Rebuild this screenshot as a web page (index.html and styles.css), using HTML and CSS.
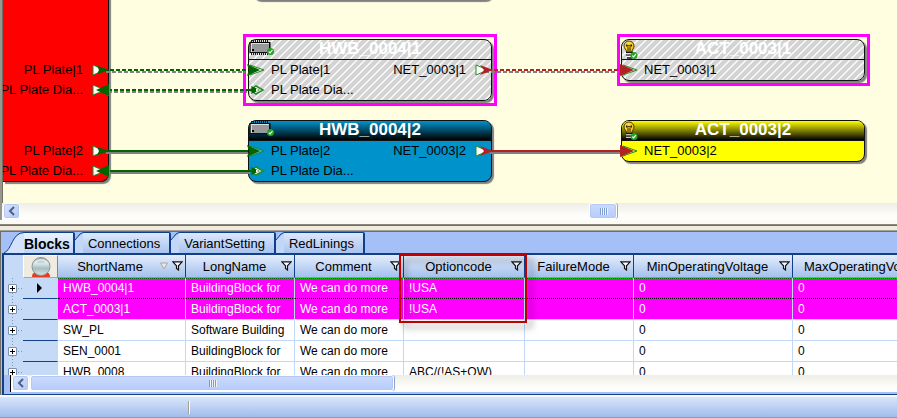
FILE: index.html
```html
<!DOCTYPE html>
<html lang="en">
<head>
<meta charset="utf-8">
<title>Block editor</title>
<link rel="stylesheet" href="styles.css">
</head>
<body>
<svg class="defs" aria-hidden="true">
  <defs>
    <linearGradient id="bulb-fill" x1="0" y1="0" x2="1" y2="1"><stop offset="0" stop-color="#ffe65c"/><stop offset="1" stop-color="#f5b800"/></linearGradient>
    <linearGradient id="ball-fill" x1="0" y1="0" x2="0" y2="1"><stop offset="0" stop-color="#8fa2a6"/><stop offset=".35" stop-color="#dbe7e8"/><stop offset=".6" stop-color="#a9bdc0"/><stop offset="1" stop-color="#d8e4e4"/></linearGradient>
    <symbol id="ok" viewBox="0 0 8 8"><circle cx="4" cy="4" r="4" fill="#22a322"/><path d="M2 4.2 3.5 5.6 6.2 2.4" fill="none" stroke="#fff" stroke-width="1.3"/></symbol>
    <symbol id="chip" viewBox="0 0 26 17">
      <path d="M2 1H20M2 14H20" stroke="#0000e0" stroke-width="2" stroke-dasharray="1 1"/>
      <rect x="1" y="2.500" width="20" height="10" fill="#999" stroke="#000"/>
      <path d="M2 3.500H20" stroke="#ddd"/><path d="M2.500 4V12" stroke="#ddd"/><path d="M20.500 3V13M1 12.500H21" stroke="#111"/>
      <rect x="3" y="9" width="2" height="2" fill="#000"/>
      <use href="#ok" x="18" y="8" width="7" height="7"/>
    </symbol>
    <symbol id="bulb" viewBox="0 0 17 21">
      <path d="M7 1a5 5 0 0 1 5 5c0 3-2 3-2 6H4.500C4.500 9 2 9 2 6a5 5 0 0 1 5-5Z" fill="url(#bulb-fill)" stroke="#4a3900"/>
      <path d="M4.500 4.500V6L6 7.500V11M9.500 4.500V6L8 7.500V11M5 5 7 6 9 5" fill="none" stroke="#2b2100"/>
      <path d="M4 12.500H11M4 15H11M5 18H10" stroke="#111" stroke-width="1.500"/><path d="M4 13.800H10M4 16.300H10" stroke="#fff"/>
      <use href="#ok" x="8" y="12" width="8" height="7"/>
    </symbol>
    <symbol id="funnel" viewBox="0 0 11 10"><path d="M.8.800H10.200L6.500 4.800V9L4.500 7.500V4.800Z" fill="#fff" stroke="#111" stroke-width="1.200"/></symbol>
    <symbol id="out-green" viewBox="0 0 18 14"><path d="M1 2V12L13 7Z" fill="#fff" stroke="#228b22"/><path d="M5 3 18 7 5 11 7 7Z" fill="#006400"/></symbol>
    <symbol id="back-green" viewBox="0 0 18 14"><path d="M1 2V12L13 7Z" fill="#fff" stroke="#228b22"/><path d="M18 2V14L12 10Z" fill="#808080"/><path d="M17 1V13L4 7Z" fill="#006400"/></symbol>
    <symbol id="in-green" viewBox="0 0 18 14"><path d="M3 2 17 7 3 12" fill="#fff" fill-opacity=".35" stroke="#228b22"/><path d="M0 1 13 7 0 13 2 7Z" fill="#006400"/></symbol>
    <symbol id="diamond" viewBox="0 0 18 14"><path d="M3 7 9 3 16 7 9 11Z" fill="#fff" stroke="#228b22" stroke-width="1.500"/><path d="M0 6H5L4 3 13 7 4 11 5 8H0Z" fill="#006400"/><path d="M9 5.500 12 7 9 8.500Z" fill="#fff"/></symbol>
    <symbol id="out-red" viewBox="0 0 18 14"><path d="M1 2V12L13 7Z" fill="#fff" stroke="#228b22"/><path d="M5 2 18 7 5 12 9 7Z" fill="#b22222"/></symbol>
    <symbol id="in-red" viewBox="0 0 18 14"><path d="M3 2 17 7 3 12" fill="#fff" fill-opacity=".35" stroke="#228b22"/><path d="M0 1 14 7 0 13Z" fill="#b22222"/></symbol>
  </defs>
</svg>

<div class="app">
  <main class="diagram">
    <section class="canvas">
      <div class="node cut"></div>
      <article class="node source">
        <div class="port p1">PL Plate|1</div>
        <div class="port p2">PL Plate Dia...</div>
        <div class="port p3">PL Plate|2</div>
        <div class="port p4">PL Plate Dia...</div>
      </article>
      <article class="node hwb one hatched">
        <h2><svg class="chip"><use href="#chip"/></svg>HWB_0004|1</h2>
        <div class="ports"><span>PL Plate|1</span><span>NET_0003|1</span></div>
        <div class="ports"><span>PL Plate Dia...</span></div>
      </article>
      <article class="node hwb two blue">
        <h2><svg class="chip"><use href="#chip"/></svg>HWB_0004|2</h2>
        <div class="ports"><span>PL Plate|2</span><span>NET_0003|2</span></div>
        <div class="ports"><span>PL Plate Dia...</span></div>
      </article>
      <article class="node act one hatched">
        <h2><svg class="bulb"><use href="#bulb"/></svg>ACT_0003|1</h2>
        <div class="ports"><span>NET_0003|1</span></div>
      </article>
      <article class="node act two yellow">
        <h2><svg class="bulb"><use href="#bulb"/></svg>ACT_0003|2</h2>
        <div class="ports"><span>NET_0003|2</span></div>
      </article>
      <div class="selection select-hwb"></div>
      <div class="selection select-act"></div>
      <svg class="wires" aria-hidden="true">
        <g fill="none" stroke-width="2">
          <g stroke="#808080">
            <path d="M106 72H245M108 92H247M485 72H618" stroke-dasharray="4 2"/>
            <path d="M106 153H248M108 173H250M490 153H621"/>
          </g>
          <g stroke="#006400">
            <path d="M104 70H247M108 90H249" stroke-dasharray="4 2"/>
            <path d="M104 151H248M108 171H250"/>
          </g>
          <g stroke="#b22222"><path d="M488 70H621" stroke-dasharray="4 2"/><path d="M488 151H621"/></g>
        </g>
        <use href="#out-green" x="92" y="63" width="18" height="14"/>
        <use href="#back-green" x="92" y="83" width="18" height="14"/>
        <use href="#out-green" x="92" y="144" width="18" height="14"/>
        <use href="#back-green" x="92" y="164" width="18" height="14"/>
        <use href="#in-green" x="247" y="63" width="18" height="14"/>
        <use href="#diamond" x="247" y="83" width="18" height="14"/>
        <use href="#in-green" x="247" y="144" width="18" height="14"/>
        <use href="#diamond" x="247" y="164" width="18" height="14"/>
        <use href="#out-red" x="475" y="63" width="18" height="14"/>
        <use href="#out-red" x="475" y="144" width="18" height="14"/>
        <use href="#in-red" x="620" y="63" width="18" height="14"/>
        <use href="#in-red" x="620" y="144" width="18" height="14"/>
      </svg>
    </section>
    <div class="scroll">
      <button class="arrow" aria-label="Scroll left"><svg viewBox="0 0 8 8"><path d="M6 0 2 4 6 8"/></svg></button>
      <div class="track"><div class="thumb small"><i></i><i></i><i></i><i></i></div></div>
    </div>
  </main>
  <div class="splitter"></div>
  <section class="panel">
    <nav class="tabs">
      <button class="tab active"><svg viewBox="0 0 20 21"><path class="fill" d="M0 21C8 18 8 1 20 1V21Z"/><path d="M0 21C8 18 8 .5 20 .5"/></svg><span>Blocks</span></button>
      <button class="tab"><svg viewBox="0 0 8 21"><path class="fill" d="M0 21V8L8 1V21Z"/><path d="M0 8 5 2 8 .5"/></svg><span>Connections</span></button>
      <button class="tab"><svg viewBox="0 0 8 21"><path class="fill" d="M0 21V8L8 1V21Z"/><path d="M0 8 5 2 8 .5"/></svg><span>VariantSetting</span></button>
      <button class="tab"><svg viewBox="0 0 8 21"><path class="fill" d="M0 21V8L8 1V21Z"/><path d="M0 8 5 2 8 .5"/></svg><span>RedLinings</span></button>
    </nav>
    <div class="grid">
      <div class="rows">
        <table>
          <colgroup><col class="c-exp"><col class="c-sel"><col class="c-short"><col class="c-text"><col class="c-text"><col class="c-opt"><col class="c-text"><col class="c-num"><col class="c-num"></colgroup>
          <thead>
            <tr>
              <th class="blank"></th>
              <th class="ball"><svg viewBox="0 0 22 20"><path d="M2 20C2 15 6 14 11 14S20 15 20 20Z" fill="#e63c1c"/><circle cx="11" cy="9.500" r="9" fill="url(#ball-fill)" stroke="#82979b"/><path d="M5 6C7 2 15 2 17 6" fill="none" stroke="#eef5f5" stroke-width="2" opacity=".7"/></svg></th>
              <th><div class="head"><span>ShortName</span><svg class="sort" viewBox="0 0 8 8"><path d="M.5 1H7.500L4 7Z"/></svg><button aria-label="Filter ShortName"><svg><use href="#funnel"/></svg></button></div></th>
              <th><div class="head"><span>LongName</span><button aria-label="Filter LongName"><svg><use href="#funnel"/></svg></button></div></th>
              <th><div class="head"><span>Comment</span><button aria-label="Filter Comment"><svg><use href="#funnel"/></svg></button></div></th>
              <th><div class="head"><span>Optioncode</span><button aria-label="Filter Optioncode"><svg><use href="#funnel"/></svg></button></div></th>
              <th><div class="head"><span>FailureMode</span><button aria-label="Filter FailureMode"><svg><use href="#funnel"/></svg></button></div></th>
              <th><div class="head"><span>MinOperatingVoltage</span><button aria-label="Filter MinOperatingVoltage"><svg><use href="#funnel"/></svg></button></div></th>
              <th><div class="head"><span>MaxOperatingVoltage</span><button aria-label="Filter MaxOperatingVoltage"><svg><use href="#funnel"/></svg></button></div></th>
            </tr>
          </thead>
          <tbody>
            <tr class="marked current"><td class="exp"><button aria-label="Expand"></button></td><td class="sel"><svg viewBox="0 0 6 10"><path d="M0 0 5 5 0 10Z"/></svg></td><td>HWB_0004|1</td><td>BuildingBlock for</td><td>We can do more</td><td>!USA</td><td></td><td>0</td><td>0</td></tr>
            <tr class="marked"><td class="exp"><button aria-label="Expand"></button></td><td class="sel"></td><td>ACT_0003|1</td><td>BuildingBlock for</td><td>We can do more</td><td>!USA</td><td></td><td>0</td><td>0</td></tr>
            <tr><td class="exp"><button aria-label="Expand"></button></td><td class="sel"></td><td>SW_PL</td><td>Software Building</td><td>We can do more</td><td></td><td></td><td>0</td><td>0</td></tr>
            <tr><td class="exp"><button aria-label="Expand"></button></td><td class="sel"></td><td>SEN_0001</td><td>BuildingBlock for</td><td>We can do more</td><td></td><td></td><td>0</td><td>0</td></tr>
            <tr><td class="exp"><button aria-label="Expand"></button></td><td class="sel"></td><td>HWB_0008</td><td>BuildingBlock for</td><td>We can do more</td><td>ABC/(!AS+QW)</td><td></td><td>0</td><td>0</td></tr>
          </tbody>
        </table>
      </div>
      <div class="scroll lower">
        <button class="arrow" aria-label="Scroll left"><svg viewBox="0 0 8 8"><path d="M6 0 2 4 6 8"/></svg></button>
        <div class="track"><div class="thumb wide"><i></i><i></i><i></i><i></i></div></div>
      </div>
      <div class="callout"></div>
    </div>
  </section>
  <footer class="status"><span></span></footer>
</div>
</body>
</html>
```
FILE: styles.css
```css
* { box-sizing: border-box; }
body { margin: 0; font: 13px "Liberation Sans", Arial, sans-serif; color: #000; }
button { font: inherit; color: inherit; padding: 0; border: 0; background: none; }
svg { display: block; }
.defs { position: absolute; width: 0; height: 0; }

.app { display: flex; flex-direction: column; height: 100vh; overflow: hidden; background: #f0ece0; }

/* Diagram */
.diagram { flex: 1; min-height: 0; display: flex; flex-direction: column; border-left: 2px solid #9a978e; box-shadow: inset 1px 0 #716f64; }
.canvas { flex: 1; position: relative; overflow: hidden; margin-left: 1px; background: #fffee1; }
.wires { position: absolute; top: 0; left: -3px; width: calc(100% + 3px); height: 100%; }
.node { position: absolute; border: 1px solid #111; border-radius: 8px; box-shadow: 2px 2px 1px #808080; }
.node h2 { position: relative; margin: 0; height: 20px; line-height: 17px; font-size: 17px; text-align: center; color: #fff; border-bottom: 1px solid #111; border-radius: 7px 7px 0 0; }
.ports { display: flex; justify-content: space-between; line-height: 20px; padding: 0 25px 0 22px; }
.hwb { left: 245px; width: 244px; }
.act { left: 618px; width: 244px; }
.one { top: 39px; }
.two { top: 120px; }
.hatched { background: linear-gradient(135deg, #fff 4%, #d3d3d3 8% 42%, #fff 46% 54%, #d3d3d3 58% 92%, #fff 96%) 0 0 / 8px 8px; }
.blue { background: #0092cb; }
.blue h2 { background: linear-gradient(#0092cb, #000); }
.yellow { background: #ff0; }
.yellow h2 { background: linear-gradient(#ff0, #000); }
.chip { position: absolute; left: 0; top: 0; width: 26px; height: 17px; }
.bulb { position: absolute; left: 0; top: 0; width: 17px; height: 21px; }
.cut { left: 249px; top: -20px; width: 240px; height: 20px; }
.source { left: 0; top: -20px; width: 106px; height: 202px; border-left: 0; border-radius: 0 0 8px 0; background: #f00; overflow: hidden; }
.port { position: absolute; right: 25px; line-height: 20px; white-space: nowrap; }
.p1 { top: 79px; }
.p2 { top: 99px; }
.p3 { top: 160px; }
.p4 { top: 180px; }
.selection { position: absolute; top: 34px; width: 254px; border: 3px solid #f0f; }
.select-hwb { left: 240px; height: 72px; }
.select-act { left: 614px; width: 253px; height: 52px; }

/* Scroll bars */
.scroll { display: flex; height: 17px; background: linear-gradient(#efede6, #fdfdfa 70%); }
.arrow { width: 17px; height: 16px; margin-left: 1px; border: 1px solid #fff; border-radius: 3px; background: linear-gradient(135deg, #dbe6ff, #b2c8f6); box-shadow: inset 0 0 0 1px #b4c7ef; }
.arrow svg { width: 8px; height: 8px; margin: auto; overflow: visible; }
.arrow path { fill: none; stroke: #4d6185; stroke-width: 2; }
.track { flex: 1; }
.thumb { display: flex; justify-content: center; align-items: center; gap: 1px; height: 16px; border: 1px solid #fff; border-radius: 3px; background: linear-gradient(#cbdafd, #b7ccfa); box-shadow: inset 0 0 0 1px #b4c8f3, 1px 0 #8ba6d6; }
.thumb i { width: 1px; height: 7px; background: #7e9bd2; box-shadow: 1px 0 #eef4fe; }
.small { width: 28px; margin-left: 569px; }
.wide { width: 364px; margin-left: 1px; }
.splitter { height: 12px; background: linear-gradient(#fbfaf5 0 4px, #8a867a 4px 5px, #716f64 5px 6px, #efebde 6px 10px, #a5a195 10px 11px, #716f64 11px); }

/* Tabs */
.panel { height: 163px; display: flex; flex-direction: column; border-left: 1px solid #716f64; background: #a4c0f6; }
.tabs { display: flex; height: 21px; padding-left: 3px; }
.tab { display: flex; height: 21px; line-height: 22px; }
.tab svg { height: 21px; width: 8px; }
.tab path { fill: none; stroke: #0f3f8c; }
.tab .fill { fill: #c2d7f8; stroke: none; }
.tab span { padding: 0 9px 0 5px; height: 21px; border-top: 1px solid #0f3f8c; border-right: 2px solid #0f3f8c; border-radius: 0 2px 0 0; background: linear-gradient(#dce8fc, #a8c3f0); }
.tab.active { font-weight: bold; font-size: 14px; }
.tab.active svg { width: 20px; }
.tab.active span { padding: 0 3px 0 0; background: linear-gradient(#eaf2fe, #bed5f8); }
.tab.active .fill { fill: #d4e3fb; }

/* Grid */
.grid { flex: 1; min-height: 0; position: relative; display: flex; flex-direction: column; margin-left: 1px; border: solid #123f85; border-width: 2px 0 1px 2px; }
.rows { height: 120px; overflow: hidden; background: #fff; }
table { width: 947px; table-layout: fixed; border-collapse: separate; border-spacing: 0; font-size: 12px; }
.c-exp { width: 19px; }
.c-sel { width: 35px; }
.c-short { width: 128px; }
.c-text { width: 109px; }
.c-opt { width: 121px; }
.c-num { width: 159px; }
th { height: 23px; padding: 0; font-size: 13px; font-weight: normal; background: linear-gradient(#e3edfc, #a5c1ee); border-right: 1px solid #123f85; border-bottom: 1px solid #7b98c9; }
th.blank { background: #c5daf6; border: 0; }
th.ball { background: #f0ebe0; border: 1px solid #fff; border-bottom-color: #aaa89c; border-right-color: #8a8776; }
.ball svg { width: 22px; height: 20px; margin: 0 auto; }
.head { display: flex; align-items: center; padding-right: 2px; }
.head span { flex: 1; padding-left: 2px; white-space: nowrap; }
.head button, .head button svg { width: 11px; height: 10px; }
.sort { width: 8px; height: 8px; margin-right: 4px; fill: #ece9e0; stroke: #aaa79d; }
td { height: 21px; padding: 0 0 0 5px; line-height: 20px; white-space: nowrap; border-right: 1px solid #c1d8f9; border-bottom: 1px solid #c1d8f9; }
.marked td { background: #f0f; color: #fff; }
.current td:nth-child(n+3) { border-bottom: 1px dotted #000; background-image: repeating-linear-gradient(90deg, #006400 0 1px, #0c0 1px 2px); background-size: 100% 1px; background-repeat: no-repeat; }
.marked .exp, .exp { padding: 0; background: linear-gradient(90deg, transparent 14px, #8b96a5 14px 15px, transparent 15px 17px, #8b96a5 17px 18px, transparent 18px) 0 10px / 100% 1px no-repeat, repeating-linear-gradient(#8b96a5 0 1px, transparent 1px 3px) 8px 0 / 1px 100% no-repeat, #c5daf6; border: 0; }
.exp button { display: block; width: 9px; height: 9px; margin: 0 0 0 4px; border: 1px solid #7b8fae; border-radius: 1px; background: linear-gradient(#000, #000) center / 5px 1px no-repeat, linear-gradient(#000, #000) center / 1px 5px no-repeat, #fff; }
.marked .sel, .sel { padding: 0; background: #c5daf6; border-bottom-color: #123f85; }
.sel svg { width: 6px; height: 10px; margin: 0 auto; }
.lower { margin-left: 7px; box-shadow: -1px 0 #000; }
.callout { position: absolute; left: 395px; top: -1px; width: 128px; height: 69px; border: 2px solid #c00000; filter: drop-shadow(5px 5px 3px rgba(0, 0, 0, .4)); }

/* Status bar */
.status { height: 23px; padding: 4px 0 0 188px; border: solid; border-width: 2px 0 1px; border-color: #f7faff #fff #9a9a86; background: linear-gradient(#d9e6fb, #a0bdea); }
.status span { display: block; width: 2px; height: 13px; border-left: 1px solid #a9a28b; background: #fff; }
```
